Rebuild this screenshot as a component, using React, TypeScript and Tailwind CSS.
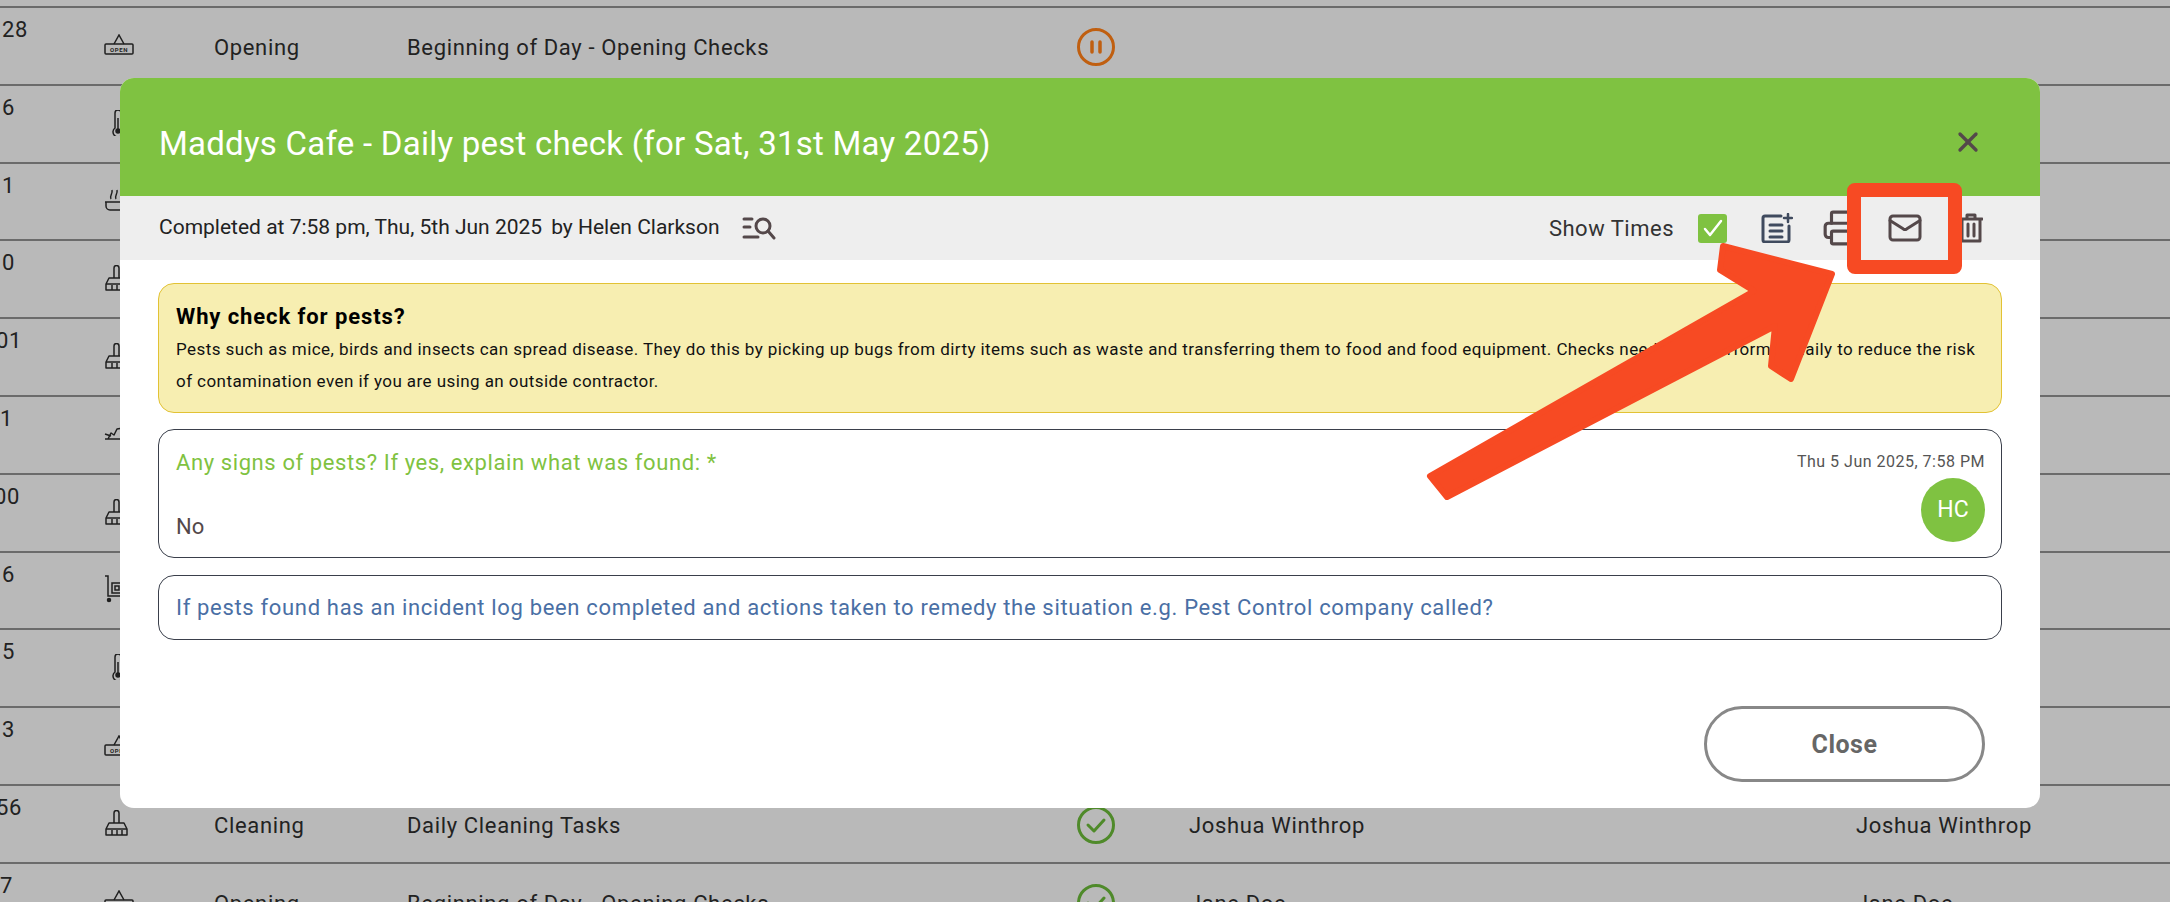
import { Mail, Printer, X } from "lucide-react";

type IconKind = "open" | "thermo" | "cook" | "broom" | "bird" | "cart";

const rows: {
  num: string;
  numWidth: string;
  icon: IconKind;
  category?: string;
  title?: string;
  status?: "paused" | "done";
  person?: string;
}[] = [
  { num: "28", numWidth: "w-[28px]", icon: "open", category: "Opening", title: "Beginning of Day - Opening Checks", status: "paused" },
  { num: "16", numWidth: "w-[15px]", icon: "thermo" },
  { num: "11", numWidth: "w-[15px]", icon: "cook" },
  { num: "10", numWidth: "w-[15px]", icon: "broom" },
  { num: "01", numWidth: "w-[22px]", icon: "broom" },
  { num: "11", numWidth: "w-[13px]", icon: "bird" },
  { num: "00", numWidth: "w-[20px]", icon: "broom" },
  { num: "16", numWidth: "w-[15px]", icon: "cart" },
  { num: "15", numWidth: "w-[15px]", icon: "thermo" },
  { num: "13", numWidth: "w-[15px]", icon: "open" },
  { num: "56", numWidth: "w-[22px]", icon: "broom", category: "Cleaning", title: "Daily Cleaning Tasks", status: "done", person: "Joshua Winthrop" },
  { num: "17", numWidth: "w-[13px]", icon: "open", category: "Opening", title: "Beginning of Day - Opening Checks", status: "done", person: "Jane Doe" },
];

function RowIcon({ kind }: { kind: IconKind }) {
  if (kind === "open") {
    return (
      <svg width="30" height="21" viewBox="0 0 30 21" fill="none" stroke="#1f1f1f" strokeWidth="1.5">
        <path d="M10 10 15 1l5 9" />
        <rect x="1" y="10" width="28" height="10" rx="1" />
        <text x="15" y="17.500" textAnchor="middle" fontSize="6" fontWeight="700" fill="#1f1f1f" stroke="none">
          OPEN
        </text>
      </svg>
    );
  }
  if (kind === "thermo") {
    return (
      <svg width="30" height="26" viewBox="0 0 30 26" fill="none" stroke="#1f1f1f" strokeWidth="1.5">
        <path d="M11 2a3 3 0 0 1 6 0v15a5 5 0 1 1-6 0z" transform="translate(0 1)" />
        <circle cx="14" cy="21" r="2" fill="#1f1f1f" />
        <path d="M14 8v12" />
      </svg>
    );
  }
  if (kind === "cook") {
    return (
      <svg width="30" height="24" viewBox="0 0 30 24" fill="none" stroke="#1f1f1f" strokeWidth="1.5">
        <path d="M1 14h26M2 14v4a4 4 0 0 0 4 4h16a4 4 0 0 0 4-4v-4" />
        <path d="M7 11c-2-3 2-5 1-9M12 11c-2-3 2-5 1-9M17 11c-2-3 2-5 1-9" />
      </svg>
    );
  }
  if (kind === "broom") {
    return (
      <svg width="26" height="26" viewBox="0 0 26 26" fill="none" stroke="#1f1f1f" strokeWidth="1.5" strokeLinejoin="round">
        <path d="M10 13V3a2.500 2.500 0 0 1 5 0v10" />
        <path d="M5 13h15l3 6v6H2v-6z" />
        <path d="M2 19h21M8 20v5M13 20v5M18 20v5" />
      </svg>
    );
  }
  if (kind === "bird") {
    return (
      <svg width="30" height="14" viewBox="0 0 30 14" fill="none" stroke="#1f1f1f" strokeWidth="1.5" strokeLinejoin="round">
        <path d="M1 12h22M4 12l3-6 3 2 3-6 6-1 6 3v8" />
        <path d="M1 7l6 2" />
      </svg>
    );
  }
  return (
    <svg width="28" height="28" viewBox="0 0 28 28" fill="none" stroke="#1f1f1f" strokeWidth="1.5">
      <path d="M1 1h3v20h22" />
      <rect x="8" y="8" width="10" height="10" />
      <rect x="11" y="11" width="4" height="4" />
      <circle cx="5" cy="25" r="1.500" fill="#1f1f1f" />
    </svg>
  );
}

function StatusIcon({ status }: { status: "paused" | "done" }) {
  if (status === "paused") {
    return (
      <svg width="38" height="38" viewBox="0 0 38 38" fill="none" stroke="#c05f10" strokeWidth="3" strokeLinecap="round">
        <circle cx="19" cy="19" r="17.500" />
        <path d="M15 14v10M23 14v10" strokeWidth="3.500" />
      </svg>
    );
  }
  return (
    <svg width="38" height="38" viewBox="0 0 38 38" fill="none" stroke="#4f8a2a" strokeWidth="3" strokeLinecap="round" strokeLinejoin="round">
      <circle cx="19" cy="19" r="17.500" />
      <path d="M11 19l6 6 10-11" />
    </svg>
  );
}

function TableRow({ row }: { row: (typeof rows)[number] }) {
  return (
    <div className="flex h-[77.8px] items-center border-t-2 border-[#6b6b6b] pt-[3px] text-[22px] tracking-[0.65px] text-[#222]">
      <div className="w-[104px] shrink-0 self-start pt-[5px] leading-[28px]">
        <div className={`${row.numWidth} flex justify-end whitespace-nowrap`}>{row.num}</div>
      </div>
      <div className="-mt-[5px] flex w-[110px] shrink-0">
        <RowIcon kind={row.icon} />
      </div>
      <div className="w-[193px] shrink-0">{row.category}</div>
      <div className="w-[670px] shrink-0">{row.title}</div>
      <div className="flex w-[112px] shrink-0">{row.status && <StatusIcon status={row.status} />}</div>
      <div className="w-[667px] shrink-0">{row.person}</div>
      <div className="shrink-0 whitespace-nowrap">{row.person}</div>
    </div>
  );
}

function Modal() {
  return (
    <div className="absolute left-[120px] top-[78px] flex h-[730px] w-[1920px] flex-col overflow-hidden rounded-[14px] bg-white">
      <div className="flex h-[118px] shrink-0 items-center justify-between bg-[#7fc241] pl-[39px] pr-[56px] pt-[9px]">
        <h1 className="pt-[4px] text-[33px] font-normal tracking-[0.25px] text-white">
          Maddys Cafe - Daily pest check (for Sat, 31st May 2025)
        </h1>
        <X size={32} strokeWidth={2.5} className="text-[#54484a]" />
      </div>

      <div className="flex h-[64px] shrink-0 items-center bg-[#eeeeee] pl-[39px] pr-[57px]">
        <span className="text-[21px] text-[#222]">Completed at 7:58 pm, Thu, 5th Jun 2025</span>
        <span className="ml-[9px] text-[21px] text-[#222]">by Helen Clarkson</span>
        <svg className="ml-[22px]" width="34" height="24" viewBox="0 0 34 24" fill="none" stroke="#54484a" strokeWidth="3" strokeLinecap="round">
          <path d="M2 3h8M2 11h6M2 21h14" />
          <circle cx="21" cy="10" r="7" />
          <path d="M26 15l6 7" />
        </svg>
        <span className="ml-auto text-[22px] tracking-[0.5px] text-[#333]">Show Times</span>
        <div className="ml-[24px] flex h-[29px] w-[29px] items-center justify-center rounded-[3px] bg-[#7fc241]">
          <svg width="22" height="20" viewBox="0 0 22 20" fill="none" stroke="#fff" strokeWidth="2.500" strokeLinecap="round" strokeLinejoin="round">
            <path d="M3 11l5 6L19 3" />
          </svg>
        </div>
        <svg className="ml-[34px]" width="32" height="30" viewBox="0 0 32 30" fill="none" stroke="#3f4a5e" strokeWidth="3" strokeLinecap="round" strokeLinejoin="round">
          <path d="M20 3H4a2 2 0 0 0-2 2v22a2 2 0 0 0 2 2h22a2 2 0 0 0 2-2V13" />
          <path d="M9 12h12M9 18h12M9 24h12" />
          <path d="M27 1v8M23 5h8" strokeWidth="2.500" />
        </svg>
        <Printer size={38} strokeWidth={2} className="ml-[29px] text-[#54484a]" />
        <Mail size={36} strokeWidth={2} className="ml-[27px] text-[#54484a]" />
        <svg className="ml-[36px]" width="24" height="30" viewBox="0 0 24 30" fill="none" stroke="#54484a" strokeWidth="3" strokeLinecap="round" strokeLinejoin="round">
          <path d="M1 6h22M8 5V2h8v3M3 6v22h18V6M9 11v12M15 11v12" />
        </svg>
      </div>

      <div className="flex flex-1 flex-col px-[38px] pt-[23px]">
        <div className="h-[130px] rounded-[16px] border border-[#e2c234] bg-[#f7eeb1] px-[17px] pt-[19px]">
          <div className="text-[22px] font-bold leading-[28px] tracking-[0.9px] text-black">Why check for pests?</div>
          <p className="whitespace-nowrap pt-[2px] text-[17px] leading-[32px] tracking-[0.43px] text-[#111]">
            Pests such as mice, birds and insects can spread disease. They do this by picking up bugs from dirty items such as waste and transferring them to food and food equipment. Checks need to be performed daily to reduce the risk
            <br />
            of contamination even if you are using an outside contractor.
          </p>
        </div>

        <div className="mt-[16px] flex h-[129px] justify-between rounded-[16px] border border-[#3a3f4b] pl-[17px] pr-[16px] pt-[19px]">
          <div className="flex flex-col">
            <span className="text-[22px] leading-[28px] tracking-[0.6px] text-[#7fc241]">
              Any signs of pests? If yes, explain what was found: *
            </span>
            <span className="mt-[36px] text-[22px] leading-[28px] text-[#54484a]">No</span>
          </div>
          <div className="flex flex-col items-end">
            <span className="-mt-[1px] text-[16px] leading-[28px] tracking-[0.5px] text-[#555]">Thu 5 Jun 2025, 7:58 PM</span>
            <div className="mt-[2px] flex h-[64px] w-[64px] items-center justify-center rounded-full bg-[#7fc241] text-[23px] text-white">
              HC
            </div>
          </div>
        </div>

        <div className="mt-[17px] flex h-[65px] items-center rounded-[16px] border border-[#3a3f4b] pl-[17px]">
          <span className="text-[22px] tracking-[0.67px] text-[#4a6fa5]">
            If pests found has an incident log been completed and actions taken to remedy the situation e.g. Pest Control company called?
          </span>
        </div>

        <div className="mt-auto mb-[26px] flex justify-end pr-[17px]">
          <button className="h-[76px] w-[281px] rounded-full border-[3px] border-[#888] pt-[1px] text-[25px] font-bold tracking-[0.5px] text-[#666]">
            Close
          </button>
        </div>
      </div>
    </div>
  );
}

export default function App() {
  return (
    <div className="relative h-[902px] w-[2170px] overflow-hidden bg-[#b9b9b9] pt-[6px] font-[Roboto,sans-serif]">
      {rows.map((row, i) => (
        <TableRow key={i} row={row} />
      ))}

      <Modal />

      {/* Annotation over the mail button */}
      <div className="absolute left-[1847px] top-[183px] h-[91px] w-[115px] rounded-[8px] border-[14px] border-[#f74a23]" />
      <svg className="absolute left-0 top-0" width="2170" height="902" fill="#f74a23" stroke="#f74a23" strokeWidth="6" strokeLinejoin="round">
        <polygon points="1723,246 1832,274 1791,379 1771,366 1775,326 1447,497 1430,476 1754,291 1720,270" />
      </svg>
    </div>
  );
}
